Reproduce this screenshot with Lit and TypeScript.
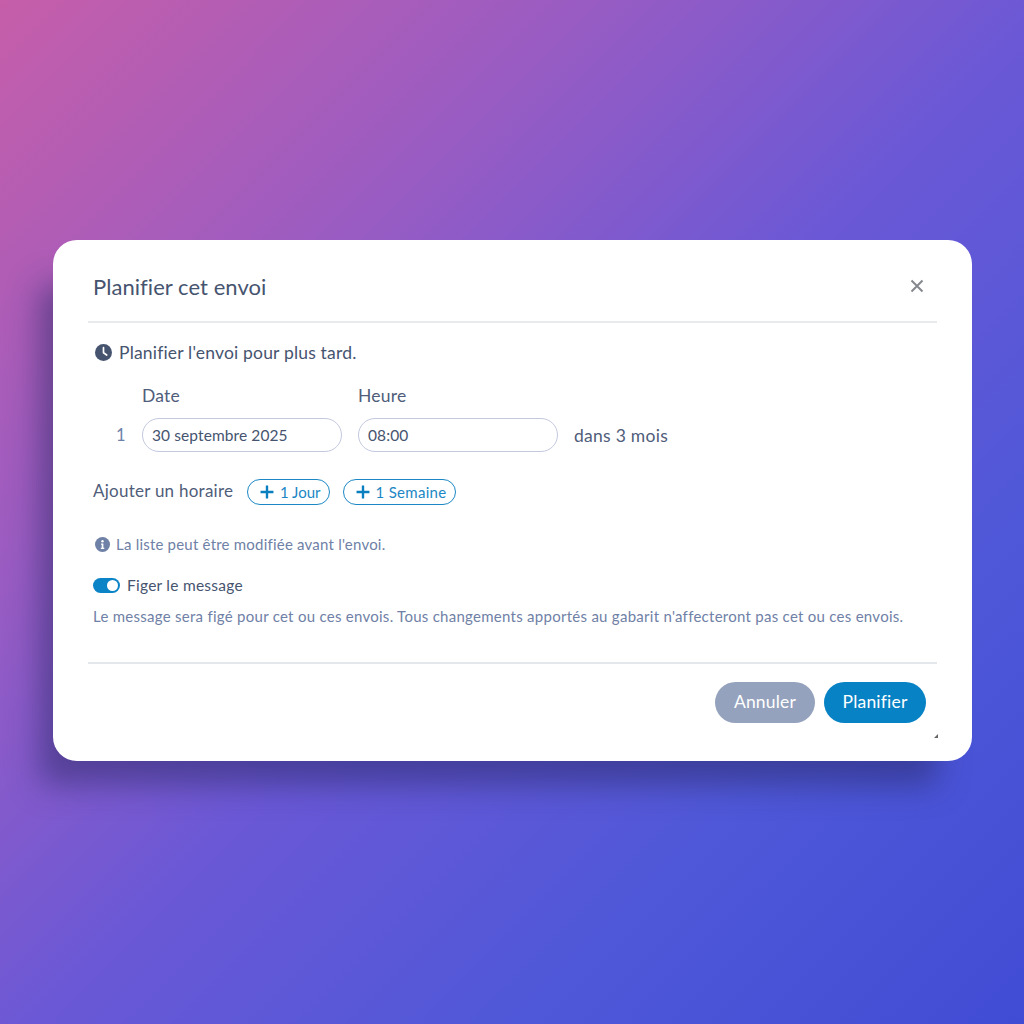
import { LitElement, html, css } from "lit";
import { customElement } from "lit/decorators.js";

@customElement("app-root")
export class AppRoot extends LitElement {
  static styles = css`
    :host {
      display: block;
      width: 1024px;
      height: 1024px;
      font-family: "Lato", "Noto Sans", sans-serif;
      color: #4a5a78;
    }
    * { box-sizing: border-box; }
    .page {
      width: 1024px;
      height: 1024px;
      padding: 240px 52px 0 53px;
      overflow: hidden;
      background: linear-gradient(135deg, #c65ea9 0%, #9a5cc2 28%, #6a58d6 52%, #4f58d8 75%, #404cd4 100%);
    }
    .modal {
      position: relative;
      height: 521px;
      padding: 0 35px;
      background: #fff;
      border-radius: 24px;
      box-shadow: -24px 34px 30px -10px rgba(40, 40, 100, 0.5);
    }
    .header {
      height: 83px;
      padding: 12px 5px 0 5px;
      display: flex;
      align-items: center;
      justify-content: space-between;
      border-bottom: 2px solid #e8eaee;
    }
    h1 {
      margin: 0;
      font-size: 22px;
      font-weight: 400;
      letter-spacing: 0.05px;
      color: #46546f;
    }
    .close { width: 16px; height: 16px; margin: 0 7px 2px 0; display: block; }
    .body { padding: 0 5px; height: 322px; border-bottom: 2px solid #e4e7ec; }
    .schedule {
      display: flex;
      align-items: center;
      gap: 7px;
      height: 20px;
      margin-top: 19px;
      padding-left: 2px;
      font-size: 17.5px;
      letter-spacing: 0.18px;
      color: #46546f;
    }
    .schedule svg { width: 17px; height: 17px; }
    .grid {
      display: grid;
      grid-template-columns: 49px 200px 216px auto;
      margin-top: 23px;
      align-items: center;
    }
    .label { font-size: 17.5px; letter-spacing: 0.2px; height: 22px; line-height: 22px; color: #4f5d7a; }
    .label.heure, .input.heure { margin-left: 16px; }
    .num { font-size: 16.5px; color: #6d81a8; text-align: left; padding-left: 23px; }
    .input {
      height: 34px;
      width: 200px;
      margin-top: 11px;
      padding: 0 9px;
      display: flex;
      align-items: center;
      border: 1.5px solid #c3c9de;
      border-radius: 17px;
      font-size: 15.5px;
      letter-spacing: 0.1px;
      color: #46546f;
    }
    .num, .rel { margin-top: 11px; }
    .rel { margin-left: 16px; font-size: 17.5px; letter-spacing: 0.27px; color: #4f5d7a; }
    .add {
      display: flex;
      align-items: center;
      margin-top: 27px;
      height: 26px;
      font-size: 17px;
      letter-spacing: 0.25px;
      color: #4f5d7a;
    }
    .add .t { width: 154px; margin-top: -4px; }
    .chip {
      height: 26px;
      display: flex;
      align-items: center;
      gap: 6px;
      padding: 0 8px 0 12px;
      margin-right: 13px;
      border: 1.5px solid #1b87c4;
      border-radius: 13px;
      font-size: 15px;
      letter-spacing: 0;
      color: #1b87c4;
    }
    .chip.wide { letter-spacing: 0.3px; padding-right: 9px; }
    .chip svg { width: 14px; height: 14px; }
    .info {
      display: flex;
      align-items: center;
      gap: 6px;
      height: 18px;
      margin-top: 30px;
      padding-left: 2px;
      font-size: 15px;
      letter-spacing: 0.21px;
      color: #6f81a6;
    }
    .info svg { width: 15px; height: 15px; }
    .freeze {
      display: flex;
      align-items: center;
      gap: 7px;
      height: 18px;
      margin-top: 23px;
      font-size: 15.5px;
      letter-spacing: 0.25px;
      color: #46546f;
    }
    .toggle {
      position: relative;
      width: 27px;
      height: 15px;
      border-radius: 8px;
      background: #0a84c6;
    }
    .toggle::after {
      content: "";
      position: absolute;
      right: 2px;
      top: 2px;
      width: 11px;
      height: 11px;
      border-radius: 50%;
      background: #fff;
    }
    .desc {
      margin-top: 13px;
      font-size: 15px;
      line-height: 18px;
      letter-spacing: 0.27px;
      white-space: nowrap;
      color: #6f81a6;
    }
    .footer {
      display: flex;
      justify-content: flex-end;
      gap: 9px;
      padding: 18px 11px 0 0;
    }
    .btn {
      height: 41px;
      padding-bottom: 2px;
      display: flex;
      align-items: center;
      justify-content: center;
      border-radius: 21px;
      color: #fff;
      font-size: 17.5px;
      letter-spacing: 0.2px;
    }
    .cancel { width: 100px; background: #95a2bd; }
    .ok { width: 102px; background: #0782c4; }
    .grip { position: absolute; right: 34px; bottom: 23px; width: 4px; height: 4px; display: block; }
  `;

  render() {
    return html`
      <div class="page">
        <div class="modal">
          <div class="header">
            <h1>Planifier cet envoi</h1>
            <svg class="close" viewBox="0 0 16 16" fill="none" stroke="#85888e" stroke-width="2">
              <path d="M2.5 2.5l11 11M13.5 2.5l-11 11" />
            </svg>
          </div>
          <div class="body">
            <div class="schedule">
              <svg viewBox="0 0 17 17">
                <circle cx="8.5" cy="8.5" r="8.5" fill="#46546f" />
                <path d="M8.5 3.6v5.2l3.2 2.2" fill="none" stroke="#fff" stroke-width="1.7" stroke-linecap="round" stroke-linejoin="round" />
              </svg>
              <span>Planifier l'envoi pour plus tard.</span>
            </div>
            <div class="grid">
              <span></span>
              <span class="label">Date</span>
              <span class="label heure">Heure</span>
              <span></span>
              <span class="num">1</span>
              <div class="input">30 septembre 2025</div>
              <div class="input heure">08:00</div>
              <span class="rel">dans 3 mois</span>
            </div>
            <div class="add">
              <span class="t">Ajouter un horaire</span>
              <div class="chip">
                <svg viewBox="0 0 13 13" stroke="#0a7fc0" stroke-width="2.2"><path d="M6.5 0.5v12M0.5 6.5h12" /></svg>
                1 Jour
              </div>
              <div class="chip wide">
                <svg viewBox="0 0 13 13" stroke="#0a7fc0" stroke-width="2.2"><path d="M6.5 0.5v12M0.5 6.5h12" /></svg>
                1 Semaine
              </div>
            </div>
            <div class="info">
              <svg viewBox="0 0 15 15">
                <circle cx="7.5" cy="7.5" r="7.5" fill="#6f81a6" />
                <circle cx="7.5" cy="4.2" r="1.2" fill="#fff" />
                <path d="M6 6.5h2.4v4.2h0.9v1.2H5.8v-1.2h0.9V7.7H6z" fill="#fff" />
              </svg>
              <span>La liste peut être modifiée avant l'envoi.</span>
            </div>
            <div class="freeze">
              <div class="toggle"></div>
              <span>Figer le message</span>
            </div>
            <div class="desc">Le message sera figé pour cet ou ces envois. Tous changements apportés au gabarit n'affecteront pas cet ou ces envois.</div>
          </div>
          <div class="footer">
            <div class="btn cancel">Annuler</div>
            <div class="btn ok">Planifier</div>
          </div>
          <svg class="grip" viewBox="0 0 4 4"><path d="M4 0v4H0z" fill="#666" /></svg>
        </div>
      </div>
    `;
  }
}
